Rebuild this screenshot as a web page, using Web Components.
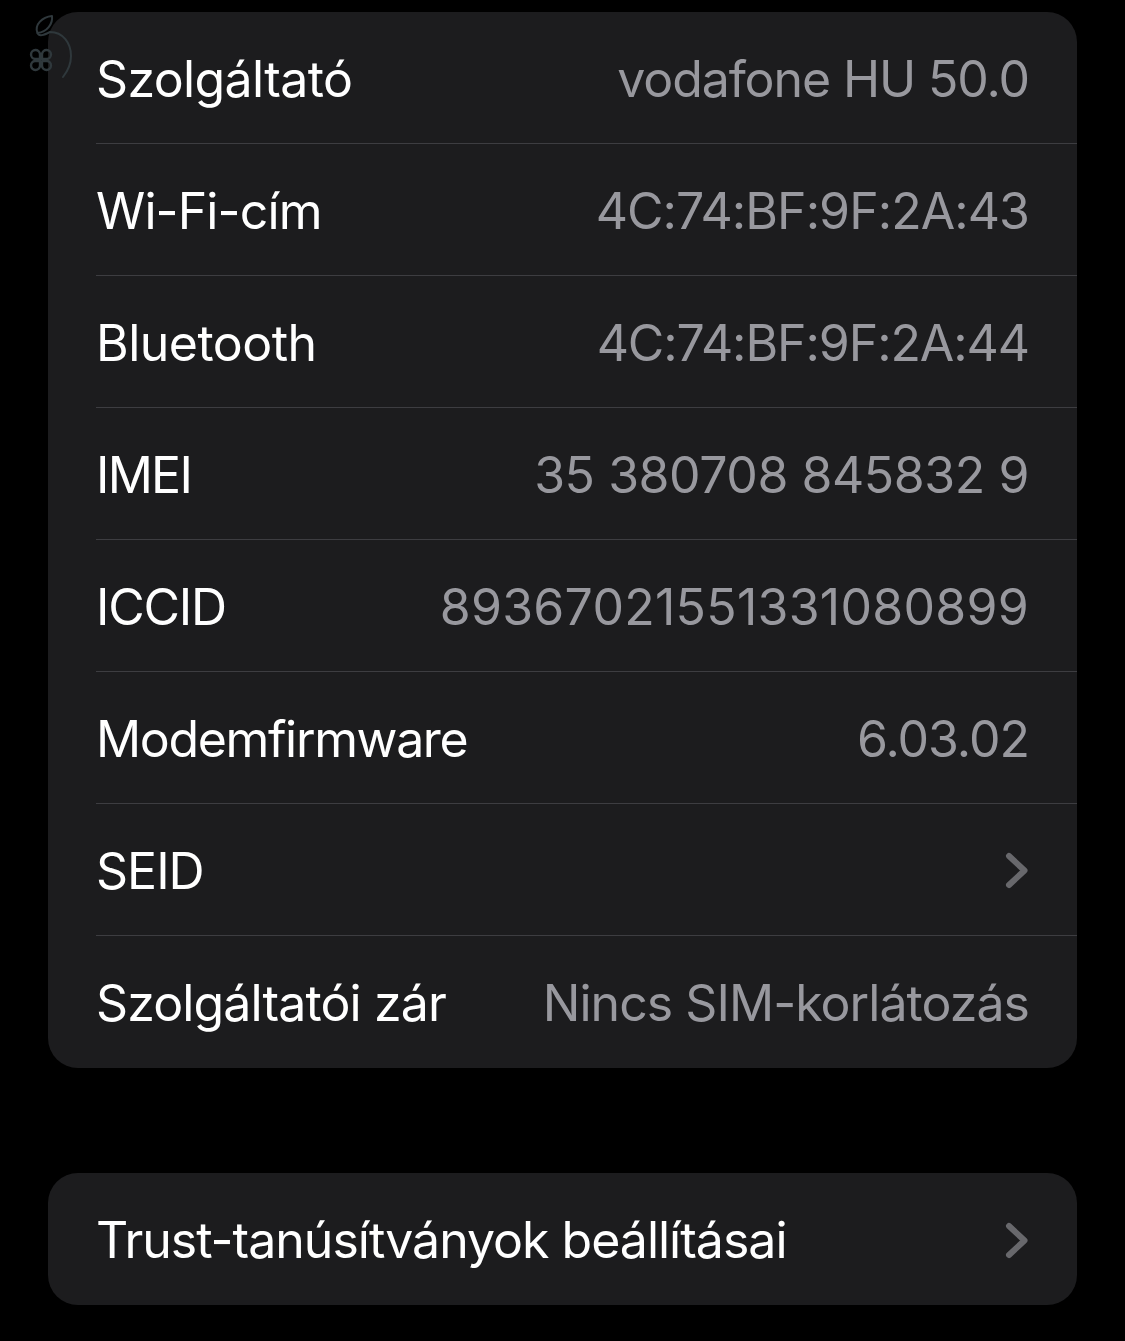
<!DOCTYPE html>
<html lang="hu">
<head>
<meta charset="utf-8">
<style>
  html, body { margin: 0; background: #000; }
  body { font-family: Inter, "Liberation Sans", sans-serif; height: 1341px; overflow: hidden; position: relative; }
</style>
</head>
<body>
<template id="group-tpl">
  <style>
    :host { display: block; background: #1c1c1e; border-radius: 30px; margin: 0 48px; overflow: hidden; }
  </style>
  <slot></slot>
</template>
<template id="row-tpl">
  <style>
    :host { display: block; padding-left: 48px; }
    .inner {
      box-sizing: border-box; height: 132px; display: flex; align-items: center; justify-content: space-between;
      padding: 2px 48px 0 0; border-bottom: 1px solid #3d3d41;
      font-size: 50px; color: #fff;
    }
    :host([last]) .inner { border-bottom: 0; }
    .label { letter-spacing: var(--label-track, 0); }
    .value { color: #98989e; letter-spacing: var(--value-track, 0); }
  </style>
  <div class="inner">
    <span class="label"><slot></slot></span>
    <span class="value"><slot name="value"></slot></span>
  </div>
</template>
<template id="chevron-tpl">
  <style>
    :host { display: block; }
    svg { display: block; }
  </style>
  <svg width="24" height="37" viewBox="0 0 24 37" fill="none" stroke="#68686c" stroke-width="6" stroke-linecap="round" stroke-linejoin="round"><path d="M4 4 L19.500 18.500 L4 33"/></svg>
</template>
<template id="badge-tpl">
  <style>
    :host { display: block; position: absolute; left: 25px; top: 12px; width: 50px; height: 70px; }
    svg { display: block; }
  </style>
  <svg width="50" height="70" viewBox="0 0 50 70" fill="none" stroke="#2f383c" stroke-width="2" stroke-linecap="round" stroke-linejoin="round">
    <path d="M12.500 21 C9 13 17 5 27 4 C28 12 22 20 12.500 21 Z"/>
    <path d="M12.500 21 C14 25 19 23 25 20 C38 20 46 31 46 44 C46 52 42 60 38 65"/>
    <path stroke-width="2.400" d="M15 47 H10 A4.500 4.500 0 1 1 15 42 Z M17 47 V42 A4.500 4.500 0 1 1 22 47 Z M15 49 V54 A4.500 4.500 0 1 1 10 49 Z M17 49 H22 A4.500 4.500 0 1 1 17 54 Z"/>
  </svg>
</template>

<settings-group style="margin-top:12px">
  <info-row style="--label-track:-.62px;--value-track:-1.1px">Szolgáltató<span slot="value">vodafone HU 50.0</span></info-row>
  <info-row style="--label-track:-.88px;--value-track:-.95px">Wi-Fi-cím<span slot="value">4C:74:BF:9F:2A:43</span></info-row>
  <info-row style="--label-track:-.52px;--value-track:-1.09px">Bluetooth<span slot="value">4C:74:BF:9F:2A:44</span></info-row>
  <info-row style="--label-track:-1.75px;--value-track:-.44px">IMEI<span slot="value">35 380708 845832 9</span></info-row>
  <info-row style="--label-track:-1.2px;--value-track:.27px">ICCID<span slot="value">89367021551331080899</span></info-row>
  <info-row style="--label-track:-1.35px;--value-track:-1px">Modemfirmware<span slot="value">6.03.02</span></info-row>
  <info-row style="--label-track:-1px">SEID<row-chevron slot="value"></row-chevron></info-row>
  <info-row last style="--label-track:-.875px;--value-track:-.95px">Szolgáltatói zár<span slot="value">Nincs SIM-korlátozás</span></info-row>
</settings-group>
<settings-group style="margin-top:105px">
  <info-row last style="--label-track:-1px">Trust-tanúsítványok beállításai<row-chevron slot="value"></row-chevron></info-row>
</settings-group>
<corner-badge></corner-badge>

<script>
  // Each element stamps its own template into an open shadow root.
  const fromTemplate = (tag, id) => customElements.define(tag, class extends HTMLElement {
    constructor() {
      super();
      this.attachShadow({ mode: 'open' }).appendChild(document.getElementById(id).content.cloneNode(true));
    }
  });
  fromTemplate('settings-group', 'group-tpl');
  fromTemplate('info-row', 'row-tpl');
  fromTemplate('row-chevron', 'chevron-tpl');
  fromTemplate('corner-badge', 'badge-tpl');
</script>
</body>
</html>
